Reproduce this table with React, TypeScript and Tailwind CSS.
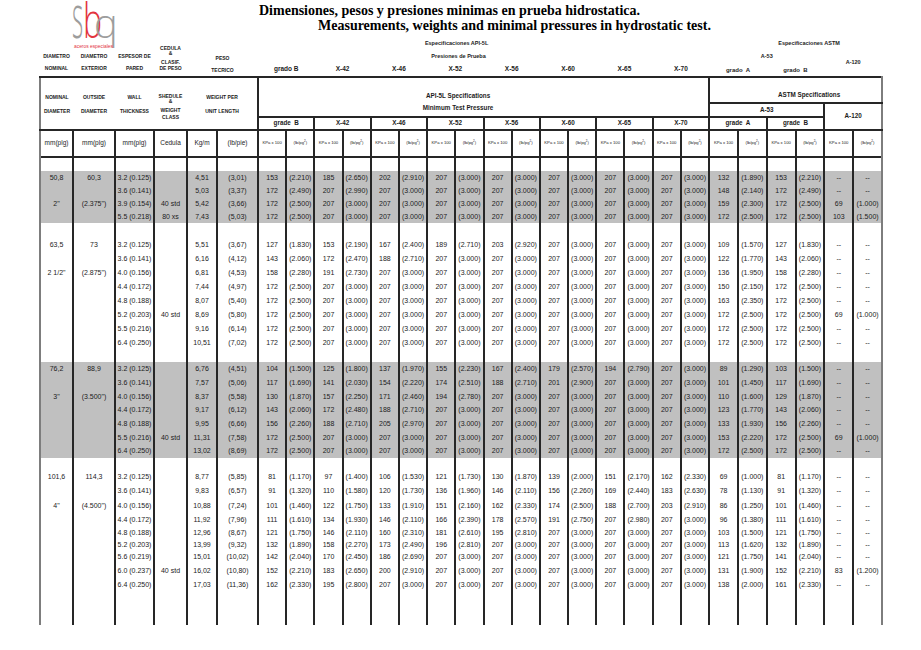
import React from 'react';

// 28 columns: 6 pipe data + 11 pressure pairs (KPa x 100 / lb/pg2)
const leftW = [33, 42, 39, 33, 30, 41];
const rightW = [...Array(16).fill(28.2), ...Array(6).fill(28.8)];

const S = '207 3.000';
const rep = (n: number) => Array(n).fill(S).join(' ');

type Row = [string, string, string, string, string, string];

interface Group {
  nom: string;
  od: string;
  nomIn: string;
  odIn: string;
  gray: boolean;
  space: string;
  rows: Row[];
}

const groups: Group[] = [
  {
    nom: '50,8', od: '60,3', nomIn: '2"', odIn: '(2.375")', gray: true, space: 'h-[14px]',
    rows: [
      ['3.2 (0.125)', '', '4,51', '(3,01)', `153 2.210 185 2.650 202 2.910 ${rep(5)} 132 1.890 153 2.210 -- --`, 'h-[13px]'],
      ['3.6 (0.141)', '', '5,03', '(3,37)', `172 2.490 207 2.990 ${rep(6)} 148 2.140 172 2.490 -- --`, 'h-[13px]'],
      ['3.9 (0.154)', '40 std', '5,42', '(3,66)', `172 2.500 ${rep(7)} 159 2.300 172 2.500 69 1.000`, 'h-[13px]'],
      ['5.5 (0.218)', '80 xs', '7,43', '(5,03)', `172 2.500 ${rep(7)} 172 2.500 172 2.500 103 1.500`, 'h-[13px]'],
    ],
  },
  {
    nom: '63,5', od: '73', nomIn: '2 1/2"', odIn: '(2.875")', gray: false, space: 'h-[14px]',
    rows: [
      ['3.2 (0.125)', '', '5,51', '(3,67)', `127 1.830 153 2.190 167 2.400 189 2.710 203 2.920 ${rep(3)} 109 1.570 127 1.830 -- --`, 'h-[14px]'],
      ['3.6 (0.141)', '', '6,16', '(4,12)', `143 2.060 172 2.470 188 2.710 ${rep(5)} 122 1.770 143 2.060 -- --`, 'h-[14px]'],
      ['4.0 (0.156)', '', '6,81', '(4,53)', `158 2.280 191 2.730 ${rep(6)} 136 1.950 158 2.280 -- --`, 'h-[14px]'],
      ['4.4 (0.172)', '', '7,44', '(4,97)', `172 2.500 ${rep(7)} 150 2.150 172 2.500 -- --`, 'h-[14px]'],
      ['4.8 (0.188)', '', '8,07', '(5,40)', `172 2.500 ${rep(7)} 163 2.350 172 2.500 -- --`, 'h-[14px]'],
      ['5.2 (0.203)', '40 std', '8,69', '(5,80)', `172 2.500 ${rep(7)} 172 2.500 172 2.500 69 1.000`, 'h-[14px]'],
      ['5.5 (0.216)', '', '9,16', '(6,14)', `172 2.500 ${rep(7)} 172 2.500 172 2.500 -- --`, 'h-[14px]'],
      ['6.4 (0.250)', '', '10,51', '(7,02)', `172 2.500 ${rep(7)} 172 2.500 172 2.500 -- --`, 'h-[14px]'],
    ],
  },
  {
    nom: '76,2', od: '88,9', nomIn: '3"', odIn: '(3.500")', gray: true, space: 'h-[13px]',
    rows: [
      ['3.2 (0.125)', '', '6,76', '(4,51)', `104 1.500 125 1.800 137 1.970 155 2.230 167 2.400 179 2.570 194 2.790 ${rep(1)} 89 1.290 103 1.500 -- --`, 'h-[13.7px]'],
      ['3.6 (0.141)', '', '7,57', '(5,06)', `117 1.690 141 2.030 154 2.220 174 2.510 188 2.710 201 2.900 ${rep(2)} 101 1.450 117 1.690 -- --`, 'h-[13.7px]'],
      ['4.0 (0.156)', '', '8,37', '(5,58)', `130 1.870 157 2.250 171 2.460 194 2.780 ${rep(4)} 110 1.600 129 1.870 -- --`, 'h-[13.7px]'],
      ['4.4 (0.172)', '', '9,17', '(6,12)', `143 2.060 172 2.480 188 2.710 ${rep(5)} 123 1.770 143 2.060 -- --`, 'h-[13.7px]'],
      ['4.8 (0.188)', '', '9,95', '(6,66)', `156 2.260 188 2.710 205 2.970 ${rep(5)} 133 1.930 156 2.260 -- --`, 'h-[13.7px]'],
      ['5.5 (0.216)', '40 std', '11,31', '(7,58)', `172 2.500 ${rep(7)} 153 2.220 172 2.500 69 1.000`, 'h-[13.7px]'],
      ['6.4 (0.250)', '', '13,02', '(8,69)', `172 2.500 ${rep(7)} 172 2.500 172 2.500 -- --`, 'h-[13.7px]'],
    ],
  },
  {
    nom: '101,6', od: '114,3', nomIn: '4"', odIn: '(4.500")', gray: false, space: 'h-[11px]',
    rows: [
      ['3.2 (0.125)', '', '8,77', '(5,85)', '81 1.170 97 1.400 106 1.530 121 1.730 130 1.870 139 2.000 151 2.170 162 2.330 69 1.000 81 1.170 -- --', 'h-[14.5px]'],
      ['3.6 (0.141)', '', '9,83', '(6,57)', '91 1.320 110 1.580 120 1.730 136 1.960 146 2.110 156 2.260 169 2.440 183 2.630 78 1.130 91 1.320 -- --', 'h-[14.5px]'],
      ['4.0 (0.156)', '', '10,88', '(7,24)', '101 1.460 122 1.750 133 1.910 151 2.160 162 2.330 174 2.500 188 2.700 203 2.910 86 1.250 101 1.460 -- --', 'h-[14.5px]'],
      ['4.4 (0.172)', '', '11,92', '(7,96)', `111 1.610 134 1.930 146 2.110 166 2.390 178 2.570 191 2.750 207 2.980 ${rep(1)} 96 1.380 111 1.610 -- --`, 'h-[14.5px]'],
      ['4.8 (0.188)', '', '12,96', '(8,67)', `121 1.750 146 2.110 160 2.310 181 2.610 195 2.810 ${rep(3)} 103 1.500 121 1.750 -- --`, 'h-[11.5px]'],
      ['5.2 (0.203)', '', '13,99', '(9,32)', `132 1.890 158 2.270 173 2.490 196 2.810 ${rep(4)} 113 1.620 132 1.890 -- --`, 'h-[11.5px]'],
      ['5.6 (0.219)', '', '15,01', '(10,02)', `142 2.040 170 2.450 186 2.690 ${rep(5)} 121 1.750 141 2.040 -- --`, 'h-[14px]'],
      ['6.0 (0.237)', '40 std', '16,02', '(10,80)', `152 2.210 183 2.650 200 2.910 ${rep(5)} 131 1.900 152 2.210 83 1.200`, 'h-[14px]'],
      ['6.4 (0.250)', '', '17,03', '(11,36)', `162 2.330 195 2.800 ${rep(6)} 138 2.000 161 2.330 -- --`, 'h-[14px]'],
    ],
  },
];

const apiGrades = ['grade\u00a0\u00a0B', 'X-42', 'X-46', 'X-52', 'X-56', 'X-60', 'X-65', 'X-70'];
const topGrades = ['grado B', 'X-42', 'X-46', 'X-52', 'X-56', 'X-60', 'X-65', 'X-70'];

// vertical rules: grey outer edges, dark inner lines
const vcls = (i: number) =>
  i === 0
    ? 'border-l-2 border-r-2 border-l-[#7d7d7d] border-r-[#262626]'
    : i === 27
    ? 'border-l-2 border-r-2 border-l-[#262626] border-r-[#7d7d7d]'
    : 'border-x-2 border-[#262626]';

const EmptyRow = ({ h, gray }: { h: string; gray?: boolean }) => (
  <tr className={`${h} ${gray ? 'bg-[#c0c0c0]' : ''}`}>
    {Array.from({ length: 28 }).map((_, i) => (
      <td key={i} className={`${vcls(i)} p-0`} />
    ))}
  </tr>
);

const Lb = () => (
  <span>
    (lb/pg<sup className="text-[3px] -top-[2px]">2</sup>)
  </span>
);

const App: React.FC = () => {
  return (
    <div className="w-[921px] h-[650px] bg-white overflow-hidden font-['Liberation_Sans',Arial,sans-serif] text-[#1c1c1c]">
      {/* Logo + title */}
      <div className="flex h-[38px]">
        <svg className="ml-[72px] shrink-0 overflow-visible" width="50" height="50" viewBox="0 0 50 50">
          <text transform="translate(0 38) scale(0.4 1)" fontSize="60" fontWeight="300" fill="#9d9d9d" fontFamily="Open Sans">s</text>
          <text transform="translate(11 38) scale(0.68 1)" fontSize="47" fontWeight="300" fill="#e3343f" fontFamily="Open Sans">b</text>
          <text transform="translate(22 38)" fontSize="40" fontWeight="300" fill="#9d9d9d" fontFamily="Open Sans">q</text>
          <text x="2" y="47.5" fontSize="6" fill="#e3343f" fontFamily="Liberation Sans" textLength="39" lengthAdjust="spacingAndGlyphs">aceros especiales</text>
        </svg>
        <div className="ml-[137px] pt-[3px] font-['Liberation_Serif',serif] font-bold text-[14px] leading-[15px] text-black">
          <div className="whitespace-nowrap">Dimensiones, pesos y presiones minimas en prueba hidrostatica.</div>
          <div className="ml-[59px] whitespace-nowrap">Measurements, weights and minimal pressures in hydrostatic test.</div>
        </div>
      </div>

      <table className="ml-[39px] w-[842px] table-fixed border-collapse">
        <colgroup>
          {[...leftW, ...rightW].map((w, i) => (
            <col key={i} className={i < 6 ? '' : ''} width={w} />
          ))}
        </colgroup>
        <thead>
          {/* Spanish labels above the box */}
          <tr className="h-[12px]">
            <td rowSpan={3} className="p-0 pb-[2px] align-bottom text-center text-[5px] font-bold leading-[12px]">
              <div>DIAMETRO</div>
              <div>NOMINAL</div>
            </td>
            <td rowSpan={3} className="p-0 pb-[2px] align-bottom text-center text-[5px] font-bold leading-[12px]">
              <div>DIAMETRO</div>
              <div>EXTERIOR</div>
            </td>
            <td rowSpan={3} className="p-0 pb-[2px] align-bottom text-center text-[5px] font-bold leading-[12px] whitespace-nowrap">
              <div>ESPESOR DE</div>
              <div>PARED</div>
            </td>
            <td rowSpan={3} className="p-0 pb-[5px] align-bottom text-center text-[5px] font-bold leading-[6px] whitespace-nowrap">
              <div>CEDULA</div>
              <div className="leading-[5px]">&amp;</div>
              <div className="mt-[3px]">CLASIF.</div>
              <div>DE PESO</div>
            </td>
            <td colSpan={2} rowSpan={3} className="p-0 align-bottom text-center text-[5px] font-bold leading-[12px]">
              <div>PESO</div>
              <div>TECRICO</div>
            </td>
            <td colSpan={16} className="p-0 pr-[54px] text-center text-[5.5px] font-bold leading-none">
              Especificaciones API-5L
            </td>
            <td colSpan={6} className="p-0 pl-[27px] text-center text-[5.5px] font-bold leading-none">
              Especificaciones ASTM
            </td>
          </tr>
          <tr className="h-[13px]">
            <td colSpan={16} className="p-0 pr-[50px] text-center text-[5.5px] font-bold leading-none">
              Presiones de Prueba
            </td>
            <td colSpan={4} className="p-0 text-center text-[5.5px] font-bold leading-none">A-53</td>
            <td colSpan={2} rowSpan={2} className="p-0 text-center text-[5.5px] font-bold leading-none">A-120</td>
          </tr>
          <tr className="h-[14px]">
            {topGrades.map((g) => (
              <td key={g} colSpan={2} className="p-0 text-center text-[6.5px] font-bold leading-none">{g}</td>
            ))}
            <td colSpan={2} className="p-0 text-center text-[6px] font-bold leading-none whitespace-pre">grado  A</td>
            <td colSpan={2} className="p-0 text-center text-[6px] font-bold leading-none whitespace-pre">grado  B</td>
          </tr>

          {/* Boxed English header */}
          <tr className="h-[26px]">
            <td rowSpan={3} className="p-0 pt-[12px] align-top text-center text-[5px] font-bold leading-[14px] border-t-2 border-b-2 border-l-2 border-t-[#262626] border-b-[#262626] border-l-[#7d7d7d]">
              <div>NOMINAL</div>
              <div>DIAMETER</div>
            </td>
            <td rowSpan={3} className="p-0 pt-[12px] align-top text-center text-[5px] font-bold leading-[14px] border-y-2 border-[#262626]">
              <div>OUTSIDE</div>
              <div>DIAMETER</div>
            </td>
            <td rowSpan={3} className="p-0 pt-[12px] align-top text-center text-[5px] font-bold leading-[14px] border-y-2 border-[#262626]">
              <div>WALL</div>
              <div>THICKNESS</div>
            </td>
            <td rowSpan={3} className="p-0 pt-[15px] align-top text-center text-[5px] font-bold leading-[6px] border-y-2 border-[#262626]">
              <div>SHEDULE</div>
              <div className="leading-[5px]">&amp;</div>
              <div className="mt-[3px]">WEIGHT</div>
              <div className="mt-[1px]">CLASS</div>
            </td>
            <td colSpan={2} rowSpan={3} className="p-0 pt-[12px] align-top text-center text-[5px] font-bold leading-[14px] border-t-2 border-b-2 border-r-2 border-[#262626]">
              <div>WEIGHT PER</div>
              <div>UNIT LENGTH</div>
            </td>
            <td colSpan={16} rowSpan={2} className="p-0 pt-[12px] pr-[51px] align-top text-center text-[6.3px] font-bold leading-[12px] border-2 border-[#262626]">
              <div>API-5L Specifications</div>
              <div>Minimum Test Pressure</div>
            </td>
            <td colSpan={6} className="p-0 pb-[2px] pl-[27px] align-bottom text-center text-[6.3px] font-bold leading-[10px] border-t-2 border-b-2 border-l-2 border-r-2 border-t-[#262626] border-b-[#262626] border-l-[#262626] border-r-[#7d7d7d]">
              ASTM Specifications
            </td>
          </tr>
          <tr className="h-[14px]">
            <td colSpan={4} className="p-0 text-center text-[6.3px] font-bold leading-none border-2 border-[#262626]">A-53</td>
            <td colSpan={2} rowSpan={2} className="p-0 text-center text-[6.3px] font-bold leading-none border-t-2 border-b-2 border-l-2 border-r-2 border-t-[#262626] border-b-[#262626] border-l-[#262626] border-r-[#7d7d7d]">
              A-120
            </td>
          </tr>
          <tr className="h-[13px]">
            {apiGrades.map((g) => (
              <td key={g} colSpan={2} className="p-0 text-center text-[6.3px] font-bold leading-none border-2 border-[#262626]">{g}</td>
            ))}
            <td colSpan={2} className="p-0 text-center text-[6.3px] font-bold leading-none border-2 border-[#262626] whitespace-pre">grade  A</td>
            <td colSpan={2} className="p-0 text-center text-[6.3px] font-bold leading-none border-2 border-[#262626] whitespace-pre">grade  B</td>
          </tr>

          {/* Units */}
          <tr className="h-[27px] border-b-2 border-[#262626]">
            {['mm(plg)', 'mm(plg)', 'mm(plg)', 'Cedula', 'Kg/m', '(lb/pie)'].map((u, i) => (
              <td key={i} className={`${vcls(i)} p-0 text-center text-[6.5px] leading-none whitespace-nowrap`}>{u}</td>
            ))}
            {Array.from({ length: 22 }).map((_, i) => (
              <td key={i} className={`${vcls(i + 6)} p-0 text-center text-[4.2px] leading-none whitespace-nowrap`}>
                {i % 2 === 0 ? 'KPa x 100' : <Lb />}
              </td>
            ))}
          </tr>
        </thead>

        <tbody className="text-[7px]">
          {groups.map((g, gi) => (
            <React.Fragment key={gi}>
              <EmptyRow h={g.space} />
              {g.rows.map((r, ri) => {
                const vals = r[4].split(' ').map((v, i) => (i % 2 === 1 && v !== '--' ? `(${v})` : v));
                const cells = [
                  ri === 0 ? g.nom : ri === 2 ? g.nomIn : '',
                  ri === 0 ? g.od : ri === 2 ? g.odIn : '',
                  r[0],
                  r[1],
                  r[2],
                  r[3],
                  ...vals,
                ];
                return (
                  <tr key={ri} className={`${r[5]} ${g.gray ? 'bg-[#c0c0c0]' : ''}`}>
                    {cells.map((c, ci) => (
                      <td key={ci} className={`${vcls(ci)} p-0 text-center leading-none whitespace-nowrap`}>
                        {c}
                      </td>
                    ))}
                  </tr>
                );
              })}
            </React.Fragment>
          ))}
          <EmptyRow h="h-[33px]" />
        </tbody>
      </table>
    </div>
  );
};

export default App;
